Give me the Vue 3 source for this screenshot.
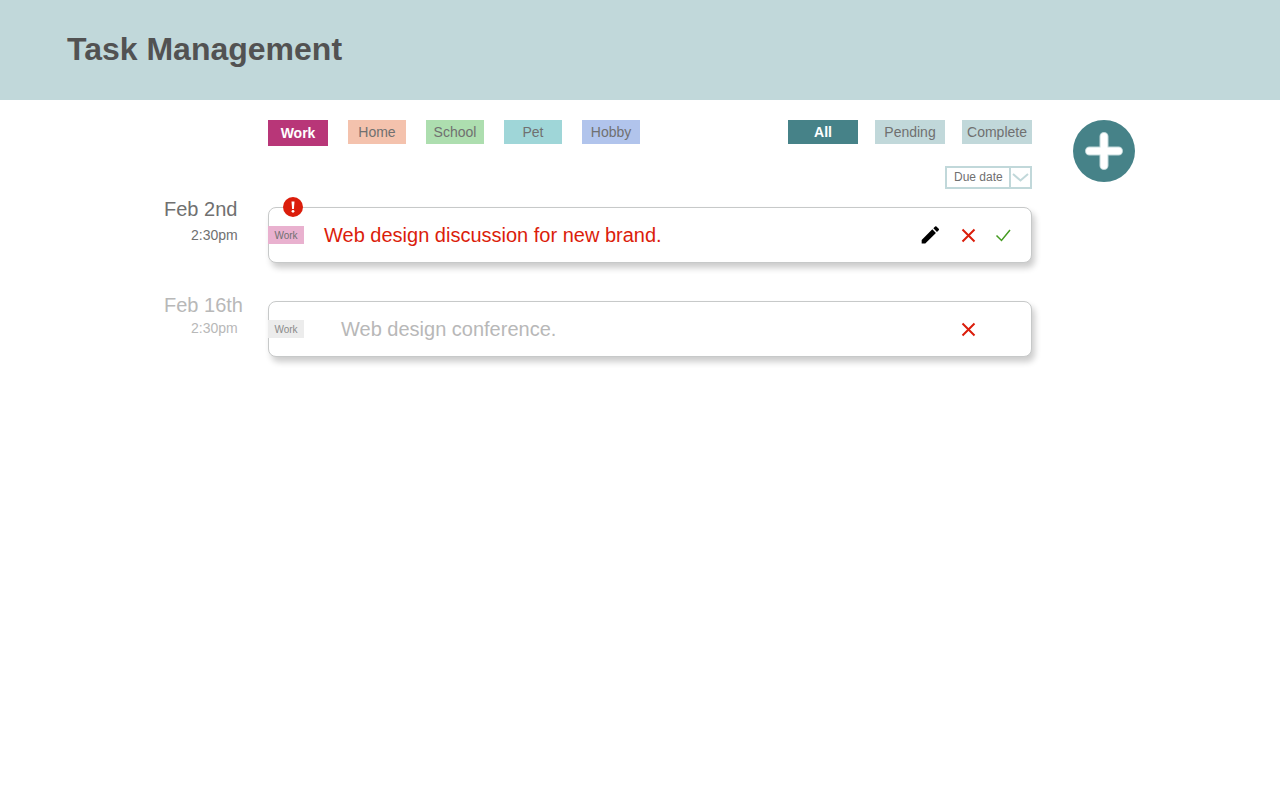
<script setup>
import { ref } from 'vue'

const categories = [
  { name: 'Work', tone: 'work' },
  { name: 'Home', tone: 'home' },
  { name: 'School', tone: 'school' },
  { name: 'Pet', tone: 'pet' },
  { name: 'Hobby', tone: 'hobby' }
]
const statuses = ['All', 'Pending', 'Complete']
const category = ref('Work')
const status = ref('All')
const sortBy = ref('Due date')

const tasks = [
  { id: 1, date: 'Feb 2nd', time: '2:30pm', tag: 'Work', title: 'Web design discussion for new brand.', done: false },
  { id: 2, date: 'Feb 16th', time: '2:30pm', tag: 'Work', title: 'Web design conference.', done: true }
]
</script>

<template>
  <div class="app">
    <header class="header">
      <h1>Task Management</h1>
    </header>

    <main class="board">
      <section class="toolbar">
        <div class="filters">
          <div class="categories">
            <button
              v-for="c in categories"
              :key="c.name"
              type="button"
              class="chip"
              :class="[c.tone, { active: category === c.name }]"
              @click="category = c.name"
            >{{ c.name }}</button>
          </div>
          <div class="statuses">
            <button
              v-for="s in statuses"
              :key="s"
              type="button"
              class="chip status"
              :class="{ active: status === s }"
              @click="status = s"
            >{{ s }}</button>
          </div>
        </div>
        <div class="sort">
          <select v-model="sortBy" aria-label="Sort by">
            <option>Due date</option>
            <option>Name</option>
          </select>
          <svg class="chevron" viewBox="0 0 22 20" aria-hidden="true">
            <path d="M1 0V20" />
            <path d="M4 6L11.500 12.500L19 6" />
          </svg>
        </div>
      </section>

      <button type="button" class="add" aria-label="Add task">
        <svg viewBox="0 0 62 62" aria-hidden="true">
          <path class="halo" d="M31 16.500V45.500M16.500 31H45.500" />
          <path d="M31 16.500V45.500M16.500 31H45.500" />
        </svg>
      </button>

      <ul class="tasks">
        <li v-for="t in tasks" :key="t.id" class="task" :class="{ done: t.done }">
          <div class="when">
            <span class="date">{{ t.date }}</span>
            <span class="time">{{ t.time }}</span>
          </div>
          <article class="card">
            <svg v-if="!t.done" class="alert" viewBox="0 0 20 20" role="img" aria-label="Urgent">
              <circle cx="10" cy="10" r="10" fill="#db1d0b" />
              <path d="M8.500 4.400H11.500L10.900 12H9.100Z" fill="#fff" />
              <circle cx="10" cy="14.300" r="1.400" fill="#fff" />
            </svg>
            <span class="tag">{{ t.tag }}</span>
            <h2>{{ t.title }}</h2>
            <div class="actions">
              <button v-if="!t.done" type="button" class="edit" aria-label="Edit">
                <svg viewBox="2.300 2.700 18.700 18.700" aria-hidden="true">
                  <path d="M3 17.250V21h3.750L17.810 9.940l-3.750-3.750L3 17.250zM20.710 7.040a1 1 0 0 0 0-1.410l-2.340-2.340a1 1 0 0 0-1.410 0l-1.830 1.830 3.750 3.750 1.830-1.830z" />
                </svg>
              </button>
              <button type="button" class="remove" aria-label="Delete">
                <svg viewBox="0 0 18 18" aria-hidden="true">
                  <path d="M3.500 3.500L15.500 15.500M15.500 3.500L3.500 15.500" />
                </svg>
              </button>
              <button v-if="!t.done" type="button" class="complete" aria-label="Mark complete">
                <svg viewBox="0 0 18 18" aria-hidden="true">
                  <path d="M1.500 9.500L6.500 14.500L15 4" />
                </svg>
              </button>
            </div>
          </article>
        </li>
      </ul>
    </main>
  </div>
</template>

<style>
body {
  background: #fff;
}
</style>

<style scoped>
.app {
  font-family: "Liberation Sans", Arial, sans-serif;
  color: #707070;
}
.app * {
  box-sizing: border-box;
}
button,
select {
  font-family: inherit;
  cursor: pointer;
}
svg {
  display: block;
}
.header {
  background: #c1d8da;
  height: 100px;
  padding: 0 67px 2px;
  display: flex;
  align-items: center;
}
h1 {
  margin: 0;
  font-size: 32px;
  line-height: 40px;
  color: #525252;
}
.board {
  display: grid;
  grid-template-columns: 104px 1fr 62px;
  padding: 20px 145px 40px 164px;
}
.toolbar {
  grid-column: 2;
  margin-right: 41px;
}
.filters,
.categories,
.statuses {
  display: flex;
  align-items: flex-start;
}
.filters {
  justify-content: space-between;
  height: 46px;
}
.categories {
  gap: 20px;
}
.statuses {
  gap: 17px;
}
.chip {
  width: 58px;
  height: 24px;
  padding: 0;
  border: 0;
  font-size: 14px;
  line-height: 24px;
  color: #707070;
}
.chip.status {
  width: 70px;
  background: #c1d8da;
}
.chip.active {
  font-weight: bold;
  color: #fff;
}
.chip.status.active {
  background: #468288;
}
.chip.work {
  width: 60px;
  height: 26px;
  background: #b83678;
}
.home { background: #f4c2ad; }
.school { background: #addeaf; }
.pet { background: #9fd6d8; }
.hobby { background: #b1c4ec; }
.sort {
  position: relative;
  width: 87px;
  margin-left: auto;
}
select {
  display: block;
  width: 100%;
  height: 23px;
  padding: 0 0 2px 7px;
  border: 2px solid #c1d8da;
  border-radius: 0;
  background: #fff;
  appearance: none;
  font-size: 12px;
  color: #707070;
}
.chevron {
  position: absolute;
  top: 2px;
  right: 1px;
  width: 22px;
  height: 20px;
  fill: none;
  stroke: #c1d8da;
  stroke-width: 2;
  pointer-events: none;
}
.add {
  grid-column: 3;
  width: 62px;
  height: 62px;
  padding: 0;
  border: 0;
  border-radius: 50%;
  background: #468288;
}
.add path {
  fill: none;
  stroke: #fff;
  stroke-width: 7;
  stroke-linecap: round;
}
.add .halo {
  stroke: #c1d8da;
  stroke-width: 9;
}
.tasks {
  grid-column: 1 / 3;
  margin: 8px 41px 0 0;
  padding: 0;
  list-style: none;
}
.task {
  display: grid;
  grid-template-columns: 104px 1fr;
  margin-bottom: 30px;
}
.when {
  display: flex;
  flex-direction: column;
  gap: 5px;
}
.done .when {
  gap: 2px;
  color: #b8b8b8;
}
.date {
  font-size: 20px;
  line-height: 24px;
}
.time {
  padding-left: 27px;
  font-size: 14px;
  line-height: 18px;
}
.card {
  position: relative;
  display: flex;
  align-items: center;
  height: 56px;
  margin-top: 10px;
  padding-right: 18px;
  border: 1px solid #c7c9c9;
  border-radius: 8px;
  background: #fff;
  box-shadow: 3px 5px 6px rgba(0, 0, 0, 0.2);
}
.done .card {
  margin-top: 8px;
}
.alert {
  position: absolute;
  top: -11px;
  left: 14px;
  width: 20px;
  height: 20px;
}
.tag {
  width: 36px;
  height: 18px;
  margin-left: -1px;
  background: #e9b1cf;
  font-size: 10px;
  line-height: 19px;
  text-align: center;
}
.done .tag {
  background: #ececec;
  color: #8a8a8a;
}
h2 {
  flex: 1;
  margin: 0 0 0 20px;
  font-size: 20px;
  line-height: 24px;
  font-weight: normal;
  color: #db1d0b;
}
.done h2 {
  margin-left: 37px;
  color: #b8b8b8;
}
.actions {
  display: flex;
  gap: 18px;
}
.done .actions {
  padding-right: 36px;
}
.actions button {
  width: 18px;
  height: 18px;
  padding: 0;
  border: 0;
  background: none;
}
.edit {
  margin-right: 2px;
}
.edit path {
  fill: #000;
}
.remove path,
.complete path {
  fill: none;
  stroke: #db1d0b;
  stroke-width: 2;
}
.complete path {
  stroke: #459b21;
  stroke-width: 1.5;
}
</style>
